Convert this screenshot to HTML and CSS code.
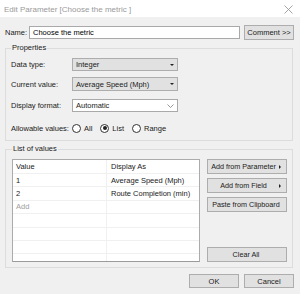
FILE: index.html
```html
<!DOCTYPE html>
<html lang="en">
<head>
  <meta charset="UTF-8" />
  <title>Edit Parameter</title>
  <link rel="stylesheet" href="styles.css">
</head>
<body>
  <div class="titlebar">
    <span class="title">Edit Parameter [Choose the metric ]</span>
    <svg class="close" width="9" height="9" viewBox="0 0 9 9">
      <path d="M0.5 0.5 L8.5 8.5 M8.5 0.5 L0.5 8.5" stroke="#9a9a9a" stroke-width="0.9" fill="none" />
    </svg>
  </div>

  <div class="dialog">
    <div class="name-row">
      <label for="nameInput">Name:</label>
      <input type="text" id="nameInput" value="Choose the metric" />
      <button class="btn comment-btn">Comment &gt;&gt;</button>
    </div>

    <fieldset class="group properties">
      <legend>Properties</legend>
      <div class="prop-row">
        <span class="prop-label">Data type:</span>
        <div class="combo">Integer<span class="caret"></span></div>
      </div>
      <div class="prop-row row-current">
        <span class="prop-label">Current value:</span>
        <div class="combo">Average Speed (Mph)<span class="caret"></span></div>
      </div>
      <div class="prop-row row-format">
        <span class="prop-label">Display format:</span>
        <div class="combo combo-edit">Automatic
          <svg class="chevron" width="7" height="4" viewBox="0 0 7 4">
            <path d="M0.5 0.5 L3.5 3.5 L6.5 0.5" stroke="#8a8a8a" stroke-width="0.9" fill="none" />
          </svg>
        </div>
      </div>
      <div class="prop-row row-allow">
        <span class="prop-label">Allowable values:</span>
        <div class="radios">
          <span class="radio"></span><span class="radio-text">All</span>
          <span class="radio checked"></span><span class="radio-text">List</span>
          <span class="radio"></span><span class="radio-text">Range</span>
        </div>
      </div>
    </fieldset>

    <fieldset class="group values">
      <legend>List of values</legend>
      <div class="values-body">
        <div class="value-table">
          <div class="vt-row vt-head"><span>Value</span><span>Display As</span></div>
          <div class="vt-row"><span>1</span><span>Average Speed (Mph)</span></div>
          <div class="vt-row"><span>2</span><span>Route Completion (min)</span></div>
          <div class="vt-row"><span class="vt-add">Add</span><span></span></div>
          <div class="vt-row"><span></span><span></span></div>
          <div class="vt-row"><span></span><span></span></div>
          <div class="vt-row"><span></span><span></span></div>
          <div class="vt-row"><span></span><span></span></div>
        </div>
        <div class="side-buttons">
          <button class="btn side-btn"><span class="btn-text">Add from Parameter</span><span class="arrow"></span></button>
          <button class="btn side-btn"><span class="btn-text">Add from Field</span><span class="arrow"></span></button>
          <button class="btn side-btn"><span class="btn-text">Paste from Clipboard</span></button>
          <button class="btn side-btn clear-btn"><span class="btn-text">Clear All</span></button>
        </div>
      </div>
    </fieldset>

    <div class="footer">
      <button class="btn footer-btn">OK</button>
      <button class="btn footer-btn">Cancel</button>
    </div>
  </div>
</body>
</html>
```

FILE: styles.css
```css
body {
  margin: 0;
  width: 300px;
  height: 294px;
  overflow: hidden;
  background-color: #f0f0f0;
  font-family: 'Liberation Sans', Arial, sans-serif;
  font-size: 7.5px;
  color: #1a1a1a;
  white-space: nowrap;
}

.titlebar {
  height: 17px;
  background-color: #fff;
  display: flex;
  align-items: center;
  justify-content: space-between;
  padding: 0 7px 0 4px;
}

.title {
  font-size: 8px;
  color: #9a9a9a;
  margin-top: 1px;
}

.close {
  margin-top: 1px;
}

.dialog {
  padding: 0 6px 0 5px;
}

/* Boutons gris type Windows */
.btn {
  font-family: inherit;
  font-size: 7.5px;
  color: #1a1a1a;
  background-color: #e1e1e1;
  border: 1px solid #adadad;
  padding: 0;
  margin: 0;
  box-sizing: border-box;
  white-space: nowrap;
}

.name-row {
  display: flex;
  align-items: center;
  margin-top: 8px;
  height: 15px;
}

.name-row label {
  width: 24px;
}

.name-row input {
  flex: 1;
  height: 13px;
  box-sizing: border-box;
  border: 1px solid #a9a9a9;
  font-family: inherit;
  font-size: 7.5px;
  padding: 0 3px;
  margin: 0 4px 0 0;
  outline: none;
}

.comment-btn {
  width: 50px;
  height: 15px;
}

.group {
  margin: 0 1px 0 0;
  border: 1px solid #dcdcdc;
  padding: 0 5px;
}

.group legend {
  padding: 0 1px;
  line-height: 10px;
  margin-left: 0;
}

.properties {
  margin-top: 3px;
  padding-top: 5px;
  padding-bottom: 5px;
}

.prop-row {
  display: flex;
  align-items: center;
  height: 13px;
}

.row-current {
  height: 14px;
  margin-top: 6px;
}

.row-format {
  margin-top: 8px;
}

.row-allow {
  height: 14px;
  margin-top: 9px;
}

.prop-label {
  width: 61px;
}

.combo {
  width: 106px;
  height: 100%;
  box-sizing: border-box;
  background-color: #e1e1e1;
  border: 1px solid #adadad;
  display: flex;
  align-items: center;
  padding: 0 3px 0 3px;
}

.combo-edit {
  background-color: #fff;
  border-color: #a9a9a9;
}

.caret {
  margin-left: auto;
  width: 0;
  height: 0;
  border-left: 2px solid transparent;
  border-right: 2px solid transparent;
  border-top: 2px solid #222;
}

.chevron {
  margin-left: auto;
}

.radios {
  display: flex;
  align-items: center;
}

.radio {
  width: 9px;
  height: 9px;
  box-sizing: border-box;
  border: 1px solid #333;
  border-radius: 50%;
  background-color: #fff;
  display: flex;
  align-items: center;
  justify-content: center;
}

.radio.checked::after {
  content: '';
  width: 4px;
  height: 4px;
  border-radius: 50%;
  background-color: #222;
}

.radio-text {
  margin: 0 8px 0 3px;
}

.values {
  margin-top: 3px;
  padding-top: 5px;
  padding-bottom: 5px;
  padding-left: 6px;
}

.values-body {
  display: flex;
  gap: 7px;
}

.value-table {
  width: 188px;
  height: 103px;
  box-sizing: border-box;
  background-color: #fff;
  border: 1px solid #ababab;
  border-bottom-color: #9a9a9a;
  overflow: hidden;
}

.vt-row {
  display: grid;
  grid-template-columns: 93px 1fr;
  height: 13.4px;
  border-bottom: 1px solid #f0f0f0;
  box-sizing: border-box;
}

.vt-head {
  height: 14px;
}

.vt-row span {
  display: flex;
  align-items: center;
  padding-left: 3px;
}

.vt-row span + span {
  border-left: 1px solid #f0f0f0;
  padding-left: 4px;
}

.vt-add {
  color: #a0a0a0;
}

.side-buttons {
  width: 80px;
  display: flex;
  flex-direction: column;
  gap: 4px;
}

.side-btn {
  height: 15px;
  display: flex;
  align-items: center;
  padding: 0 5px 0 3px;
  font-size: 7.2px;
}

.side-btn .btn-text {
  flex: 1;
  text-align: center;
}

.arrow {
  width: 0;
  height: 0;
  border-top: 2px solid transparent;
  border-bottom: 2px solid transparent;
  border-left: 2px solid #222;
  margin-left: 3px;
}

.clear-btn {
  margin-top: auto;
}

.footer {
  display: flex;
  justify-content: flex-end;
  gap: 5px;
  margin-top: 6px;
}

.footer-btn {
  width: 50px;
  height: 14px;
}
```
